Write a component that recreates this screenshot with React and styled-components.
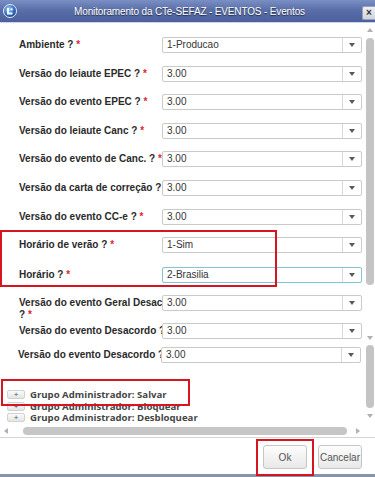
import React from 'react';
import styled, { createGlobalStyle } from 'styled-components';

const GlobalStyle = createGlobalStyle`
  html, body { margin: 0; padding: 0; background: #fff; }
  body { font-family: "Liberation Sans", Arial, sans-serif; }
`;

const Window = styled.div`
  position: relative;
  width: 375px;
  height: 477px;
  display: flex;
  flex-direction: column;
  background: #fff;
  overflow: hidden;
`;

const TitleBar = styled.div`
  height: 22px;
  flex: none;
  display: flex;
  align-items: center;
  padding-left: 3px;
  background: linear-gradient(#7a8fc3, #5a6fa9 45%, #4b609c);
  border-bottom: 1px solid #cdd5e6;
`;

const Title = styled.div`
  flex: 1;
  text-align: center;
  color: #fff;
  font-size: 10px;
  letter-spacing: -0.15px;
  text-shadow: 0 1px 1px rgba(0, 0, 0, 0.6);
`;

const CloseButton = styled.div`
  width: 13px;
  height: 14px;
  box-sizing: border-box;
  margin-top: 4px;
  border: 1px solid #9aa3b5;
  border-right: none;
  border-radius: 2px 0 0 2px;
  background: linear-gradient(#eef0f4, #cfd4dd);
  color: #333;
  font-size: 10px;
  font-weight: bold;
  line-height: 12px;
  text-align: center;
`;

const Body = styled.div`
  flex: 1;
  min-height: 0;
  display: flex;
  border-bottom: 1px solid #d6d6d6;
`;

const Main = styled.div`
  flex: 1;
  display: flex;
  flex-direction: column;
  padding-top: 14px;
  min-width: 0;
`;

const Row = styled.div`
  display: grid;
  grid-template-columns: 143px 200px;
  grid-template-rows: 16px;
  height: 16px;
  margin-top: ${(p) => p.$gap}px;
  padding-left: ${(p) => p.$indent}px;
`;

const Label = styled.div`
  grid-column: 1;
  grid-row: 1;
  width: 172px;
  padding-top: 2px;
  font-size: 10px;
  line-height: 12px;
  font-weight: bold;
  color: #2a2a2a;
`;

const Star = styled.span`
  color: #e0242c;
`;

const Select = styled.div`
  grid-column: 2;
  grid-row: 1;
  position: relative;
  z-index: 1;
  display: flex;
  height: 16px;
  box-sizing: border-box;
  border: 1px solid ${(p) => (p.$focus ? '#80c4d6' : '#cacaca')};
  border-radius: 2px;
  background: #fff;
`;

const Value = styled.span`
  flex: 1;
  padding-left: 4px;
  font-size: 10px;
  line-height: 14px;
  color: #333;
`;

const Caret = styled.span`
  width: 18px;
  border-left: 1px solid #d8d8d8;
  display: flex;
  align-items: center;
  justify-content: center;
  &::after {
    content: '';
    border-left: 3.5px solid transparent;
    border-right: 3.5px solid transparent;
    border-top: 4px solid #5a5a5a;
  }
`;

const GroupList = styled.div`
  margin-top: 26px;
  padding-left: 7px;
  display: flex;
  flex-direction: column;
`;

const GroupItem = styled.div`
  height: 11.5px;
  display: flex;
  align-items: center;
  gap: 5px;
  font-family: "Open Sans", "Liberation Sans", sans-serif;
  font-weight: 700;
  font-size: 9.6px;
  color: #454545;
  white-space: nowrap;
`;

const PlusButton = styled.span`
  width: 18px;
  height: 9px;
  box-sizing: border-box;
  border: 1px solid #d2d2d2;
  border-radius: 2px;
  background: linear-gradient(#fbfbfb, #e4e4e4);
  font-family: "Liberation Sans", Arial, sans-serif;
  font-size: 8px;
  font-weight: normal;
  line-height: 7px;
  text-align: center;
  color: #555;
`;

const HScroll = styled.div`
  margin-top: auto;
  height: 12px;
  display: flex;
  align-items: center;
  padding-left: 4px;
`;

const Tri = styled.span`
  flex: none;
  width: 0;
  height: 0;
  margin-left: ${(p) => p.$ml || 0}px;
  margin-top: ${(p) => p.$mt || 0}px;
  ${(p) =>
    p.$dir === 'up'
      ? 'border-left: 3.5px solid transparent; border-right: 3.5px solid transparent; border-bottom: 4px solid #b0b0b0;'
      : p.$dir === 'down'
      ? 'border-left: 3.5px solid transparent; border-right: 3.5px solid transparent; border-top: 4px solid #b0b0b0;'
      : p.$dir === 'left'
      ? 'border-top: 3.5px solid transparent; border-bottom: 3.5px solid transparent; border-right: 4px solid #b0b0b0;'
      : 'border-top: 3.5px solid transparent; border-bottom: 3.5px solid transparent; border-left: 4px solid #b0b0b0;'}
`;

const HThumb = styled.div`
  margin-left: 15px;
  width: 324px;
  height: 8px;
  border-radius: 4px;
  background: #c6c6c6;
`;

const VScroll = styled.div`
  width: 12px;
  flex: none;
  box-sizing: border-box;
  padding: 5px 0 0 2px;
  display: flex;
  flex-direction: column;
  align-items: center;
`;

const VThumb = styled.div`
  flex: none;
  width: 8px;
  height: ${(p) => p.$h}px;
  margin-top: ${(p) => p.$mt}px;
  border-radius: 4px;
  background: #c4c4c4;
`;

const Footer = styled.div`
  height: 39px;
  flex: none;
  box-sizing: border-box;
  display: flex;
  justify-content: flex-end;
  align-items: flex-start;
  gap: 11px;
  padding: 7px 13px 0 0;
  border-bottom: 3px solid #8694ac;
`;

const Button = styled.button`
  width: 44px;
  height: 24px;
  padding: 0;
  border: 1px solid #c6c6c6;
  border-radius: 3px;
  background: linear-gradient(#fdfdfd, #e8e8e8);
  font-family: "Liberation Sans", Arial, sans-serif;
  font-size: 10px;
  color: #555;
`;

const Highlight = styled.div`
  position: absolute;
  left: ${(p) => p.$x}px;
  top: ${(p) => p.$y}px;
  width: ${(p) => p.$w}px;
  height: ${(p) => p.$h}px;
  box-sizing: border-box;
  border: 2px solid #d5151f;
  pointer-events: none;
  z-index: 5;
`;

const AppIcon = () => (
  <svg width="14" height="14" viewBox="0 0 14 14">
    <defs>
      <radialGradient id="ig" cx="0.4" cy="0.35" r="0.7">
        <stop offset="0" stopColor="#a8d0f4" />
        <stop offset="0.6" stopColor="#2f6fc0" />
        <stop offset="1" stopColor="#163f82" />
      </radialGradient>
    </defs>
    <circle cx="7" cy="7" r="6.5" fill="url(#ig)" stroke="#e8eef8" strokeWidth="1" />
    <path d="M5 4 V9.5 H9.5" fill="none" stroke="#fff" strokeWidth="1.8" />
    <circle cx="8.6" cy="5.3" r="1.1" fill="#fff" />
  </svg>
);

const rows = [
  { label: 'Ambiente ?', value: '1-Producao', gap: 0 },
  { label: 'Versão do leiaute EPEC ?', value: '3.00', gap: 13 },
  { label: 'Versão do evento EPEC ?', value: '3.00', gap: 12 },
  { label: 'Versão do leiaute Canc ?', value: '3.00', gap: 13 },
  { label: 'Versão do evento de Canc. ?', value: '3.00', gap: 12 },
  { label: 'Versão da carta de correção ?', value: '3.00', gap: 13 },
  { label: 'Versão do evento CC-e ?', value: '3.00', gap: 13 },
  { label: 'Horário de verão ?', value: '1-Sim', gap: 12 },
  { label: 'Horário ?', value: '2-Brasilia', gap: 14, focus: true },
  { label: 'Versão do evento Geral Desacordo ?', value: '3.00', gap: 12 },
  { label: 'Versão do evento Desacordo ?', value: '3.00', gap: 12 },
  { label: 'Versão do evento Desacordo ?', value: '3.00', gap: 8, indent: 18 },
];

const groups = [
  'Grupo Administrador: Salvar',
  'Grupo Administrador: Bloquear',
  'Grupo Administrador: Desbloquear',
];

export default function App() {
  return (
    <>
      <GlobalStyle />
      <Window>
        <TitleBar>
          <AppIcon />
          <Title>Monitoramento da CTe-SEFAZ - EVENTOS - Eventos</Title>
          <CloseButton>×</CloseButton>
        </TitleBar>
        <Body>
          <Main>
            {rows.map((r, i) => (
              <Row key={i} $gap={r.gap} $indent={r.indent || 19}>
                <Label>
                  {r.label} <Star>*</Star>
                </Label>
                <Select $focus={r.focus}>
                  <Value>{r.value}</Value>
                  <Caret />
                </Select>
              </Row>
            ))}
            <GroupList>
              {groups.map((g) => (
                <GroupItem key={g}>
                  <PlusButton>+</PlusButton>
                  {g}
                </GroupItem>
              ))}
            </GroupList>
            <HScroll>
              <Tri $dir="left" />
              <HThumb />
              <Tri $dir="right" $ml={9} />
            </HScroll>
          </Main>
          <VScroll>
            <Tri $dir="up" />
            <VThumb $mt={6} $h={247} />
            <Tri $dir="down" $mt={51} />
            <VThumb $mt={5} $h={63} />
            <Tri $dir="down" $mt={6} />
          </VScroll>
        </Body>
        <Footer>
          <Button>Ok</Button>
          <Button>Cancelar</Button>
        </Footer>
        <Highlight $x={0} $y={230} $w={277} $h={57} />
        <Highlight $x={1} $y={379} $w={189} $h={27} />
        <Highlight $x={256} $y={439} $w={58} $h={37} />
      </Window>
    </>
  );
}
